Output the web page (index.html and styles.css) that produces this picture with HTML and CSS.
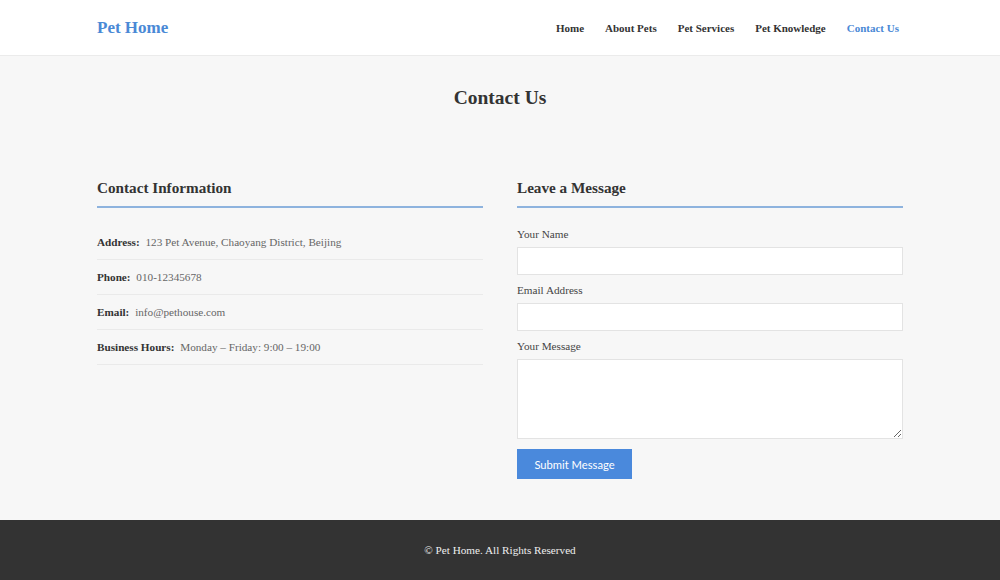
FILE: index.html
```html
<!DOCTYPE html>
<html lang="en">
<head>
    <meta charset="UTF-8">
    <meta name="viewport" content="width=device-width, initial-scale=1.0">
    <title>Contact Us - Pet Home</title>
    <link rel="stylesheet" href="styles.css">
</head>
<body>
    <header class="site-header">
        <div class="container header-inner">
            <a href="#" class="logo">Pet Home</a>
            <nav class="nav">
                <a href="#">Home</a>
                <a href="#">About Pets</a>
                <a href="#">Pet Services</a>
                <a href="#">Pet Knowledge</a>
                <a href="#" class="active">Contact Us</a>
            </nav>
        </div>
    </header>

    <main class="main">
        <div class="container">
            <h1 class="page-title">Contact Us</h1>

            <div class="columns">
                <section class="contact-info">
                    <h2 class="section-title">Contact Information</h2>
                    <ul class="info-list">
                        <li><strong>Address:</strong> 123 Pet Avenue, Chaoyang District, Beijing</li>
                        <li><strong>Phone:</strong> 010-12345678</li>
                        <li><strong>Email:</strong> info@pethouse.com</li>
                        <li><strong>Business Hours:</strong> Monday &ndash; Friday: 9:00 &ndash; 19:00</li>
                    </ul>
                </section>

                <section class="contact-form">
                    <h2 class="section-title">Leave a Message</h2>
                    <form>
                        <div class="form-group">
                            <label for="name">Your Name</label>
                            <input type="text" id="name">
                        </div>
                        <div class="form-group">
                            <label for="email">Email Address</label>
                            <input type="email" id="email">
                        </div>
                        <div class="form-group">
                            <label for="message">Your Message</label>
                            <textarea id="message"></textarea>
                        </div>
                        <button type="submit" class="btn">Submit Message</button>
                    </form>
                </section>
            </div>
        </div>
    </main>

    <footer class="site-footer">
        <p>&copy; Pet Home. All Rights Reserved</p>
    </footer>
</body>
</html>
```

FILE: styles.css
```css
* {
    box-sizing: border-box;
}

body {
    margin: 0;
    font-family: 'Liberation Serif', 'Times New Roman', serif;
    font-size: 11.2px;
    color: #555;
    background-color: #f7f7f7;
}

.container {
    width: 806px;
    margin: 0 auto;
}

.site-header {
    background-color: #fff;
    border-bottom: 1px solid #ebebeb;
}

.header-inner {
    height: 55px;
    display: flex;
    justify-content: space-between;
    align-items: center;
}

.logo {
    font-size: 17px;
    font-weight: bold;
    color: #4a89d6;
    text-decoration: none;
}

.nav {
    display: flex;
    gap: 21px;
    padding-right: 4px;
}

.nav a {
    font-size: 11px;
    font-weight: bold;
    color: #333;
    text-decoration: none;
}

.nav a.active {
    color: #4a89d6;
}

.main {
    padding: 30px 0 41px;
}

.page-title {
    margin: 0;
    text-align: center;
    font-size: 19.5px;
    line-height: 23px;
    color: #333;
}

.columns {
    display: grid;
    grid-template-columns: 1fr 1fr;
    gap: 34px;
    margin-top: 70px;
}

.section-title {
    margin: 0;
    font-size: 15.2px;
    line-height: 18px;
    color: #333;
    padding-bottom: 9px;
    border-bottom: 2px solid #8eb3de;
}

.info-list {
    list-style: none;
    margin: 17px 0 0;
    padding: 0;
}

.info-list li {
    padding: 10px 0;
    line-height: 14px;
    border-bottom: 1px solid #eaeaea;
    color: #666;
}

.info-list strong {
    color: #333;
    margin-right: 3px;
}

form {
    margin-top: 19px;
}

.form-group {
    margin-bottom: 8px;
}

.form-group label {
    display: block;
    line-height: 14px;
    margin-bottom: 6px;
    color: #444;
}

.form-group input,
.form-group textarea {
    display: block;
    width: 100%;
    border: 1px solid #e3e3e3;
    background-color: #fff;
    font-family: inherit;
    font-size: 11px;
    padding: 6px 8px;
    outline: none;
}

.form-group input {
    height: 28px;
}

.form-group textarea {
    height: 80px;
}

.form-group:last-of-type {
    margin-bottom: 10px;
}

.btn {
    width: 115px;
    height: 30px;
    border: none;
    background-color: #4a89dc;
    color: #fff;
    font-family: Lato, 'Open Sans', sans-serif;
    font-size: 11.2px;
    cursor: pointer;
}

.site-footer {
    background-color: #333;
    color: #eee;
    height: 60px;
    display: flex;
    align-items: center;
    justify-content: center;
}

.site-footer p {
    margin: 0;
}
```
